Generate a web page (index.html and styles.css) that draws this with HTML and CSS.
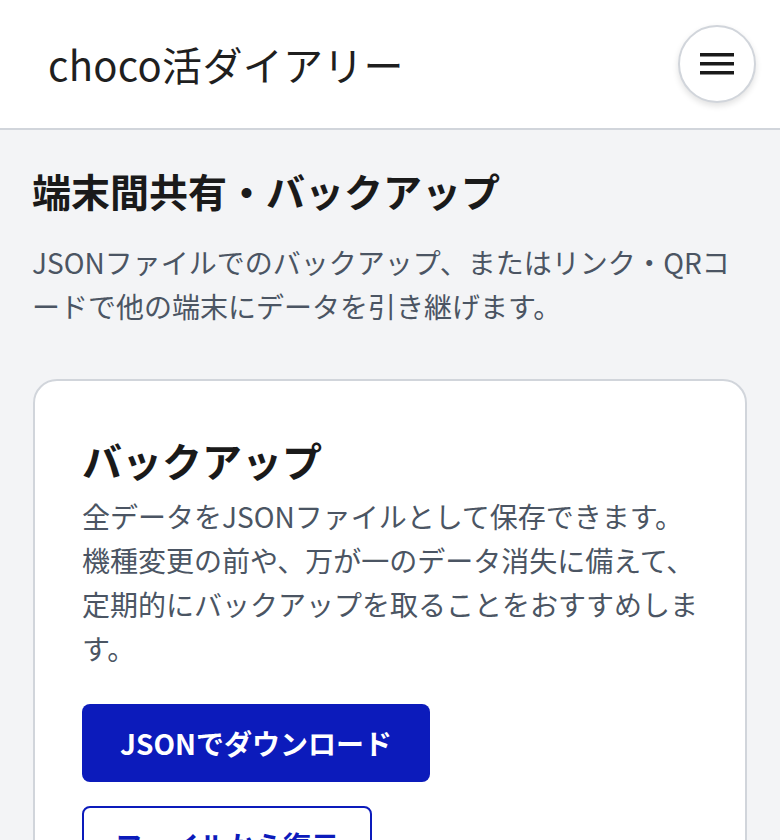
FILE: index.html
```html
<!DOCTYPE html>
<html lang="ja">
<head>
<meta charset="utf-8">
<title>choco活ダイアリー</title>
<link rel="stylesheet" href="styles.css">
</head>
<body>
<header class="header">
  <div class="brand">choco活ダイアリー</div>
  <button class="menu-btn" aria-label="メニュー">
    <svg width="36" height="24" viewBox="0 0 36 24" aria-hidden="true">
      <rect x="1" y="1" width="34" height="3.5" fill="#1a1a1a"/>
      <rect x="1" y="10" width="34" height="3.5" fill="#1a1a1a"/>
      <rect x="1" y="19" width="34" height="3.5" fill="#1a1a1a"/>
    </svg>
  </button>
</header>
<main class="main">
  <h1 class="page-title">端末間共有・バックアップ</h1>
  <p class="page-desc">JSONファイルでのバックアップ、またはリンク・QRコードで他の端末にデータを引き継げます。</p>
  <section class="card">
    <h2 class="card-title">バックアップ</h2>
    <p class="card-desc">全データをJSONファイルとして保存できます。機種変更の前や、万が一のデータ消失に備えて、定期的にバックアップを取ることをおすすめします。</p>
    <div class="actions">
      <button class="btn btn-primary">JSONでダウンロード</button>
      <button class="btn btn-outline">ファイルから復元</button>
    </div>
  </section>
</main>
</body>
</html>
```
FILE: styles.css
```css
html, body {
  margin: 0;
  padding: 0;
}
body {
  background: #f3f4f6;
  font-family: "Noto Sans CJK JP", "Noto Sans", sans-serif;
  color: #1a1a1a;
  width: 780px;
  min-height: 840px;
  overflow: hidden;
}
.header {
  height: 128px;
  background: #ffffff;
  border-bottom: 2px solid #d1d5db;
  display: flex;
  align-items: center;
  justify-content: space-between;
  padding: 0 24px 0 48px;
}
.brand {
  font-size: 40px;
  font-weight: 400;
  color: #1f1f1f;
  letter-spacing: 0.3px;
}
.menu-btn {
  width: 78px;
  height: 78px;
  border-radius: 50%;
  border: 2px solid #d1d5db;
  background: #ffffff;
  box-shadow: 0 3px 6px rgba(0, 0, 0, 0.12);
  display: flex;
  align-items: center;
  justify-content: center;
  padding: 0;
}
.menu-btn svg {
  display: block;
}
.main {
  padding: 32px 32px 0 32px;
}
.page-title {
  margin: 0;
  font-size: 39px;
  line-height: 56px;
  font-weight: 700;
  color: #1a1a1a;
}
.page-desc {
  margin: 22px 0 51px;
  font-size: 28px;
  line-height: 44px;
  color: #4b5563;
}
.card {
  background: #ffffff;
  border: 2px solid #d1d5db;
  border-radius: 24px;
  width: 714px;
  box-sizing: border-box;
  margin-left: 1px;
  padding: 48px 40px 48px 47px;
}
.card-title {
  margin: 0;
  font-size: 40px;
  line-height: 62px;
  font-weight: 700;
  color: #1a1a1a;
}
.card-desc {
  margin: 3px 0 34px;
  font-size: 28px;
  line-height: 44px;
  color: #4b5563;
}
.actions {
  display: flex;
  flex-direction: column;
  align-items: flex-start;
  gap: 24px;
}
.btn {
  font-family: "Noto Sans CJK JP", "Noto Sans", sans-serif;
  font-size: 28px;
  font-weight: 700;
  height: 78px;
  border-radius: 8px;
  box-sizing: border-box;
}
.btn-primary {
  background: #0c1bbb;
  color: #ffffff;
  border: none;
  padding: 0 38px;
}
.btn-outline {
  background: #ffffff;
  color: #0c1bbb;
  border: 2px solid #0c1bbb;
  padding: 0 31px;
}
```
